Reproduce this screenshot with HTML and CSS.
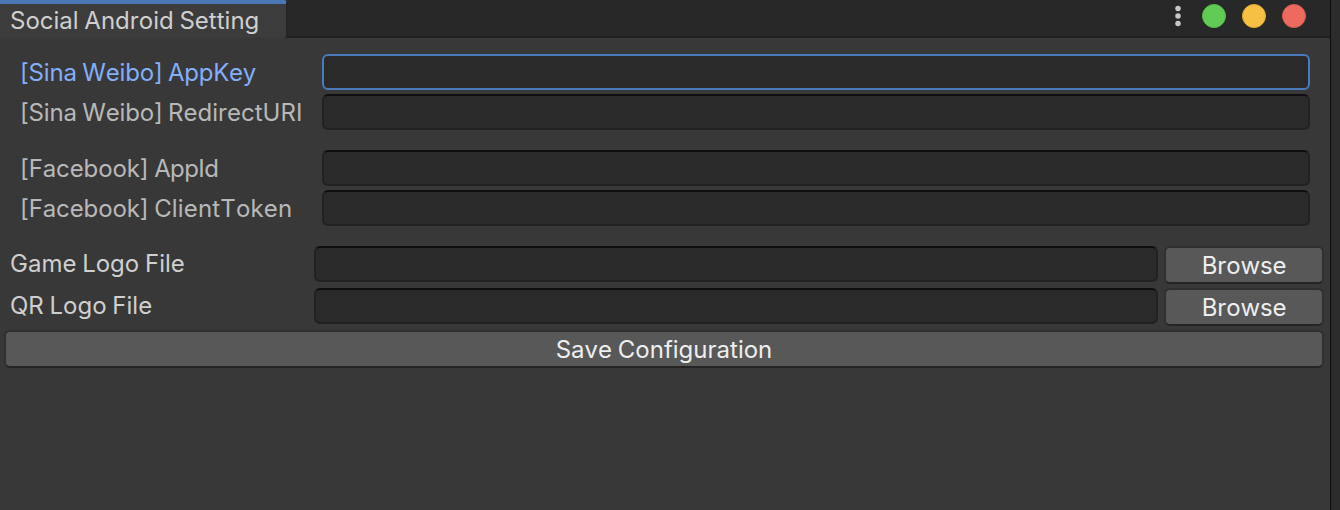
FILE: index.html
```html
<!DOCTYPE html>
<html lang="en">
<head>
<meta charset="utf-8">
<title>Social Android Setting</title>
<link rel="stylesheet" href="styles.css">
</head>
<body>
<div class="screen">
  <main class="window">
    <header class="titlebar">
      <div class="tab"><span class="tab-label">Social Android Setting</span></div>
      <div class="strip">
        <svg class="menu" width="6" height="22" viewBox="0 0 6 22"><g fill="#c8c8c8"><circle cx="3" cy="3.5" r="2.75"/><circle cx="3" cy="11" r="2.75"/><circle cx="3" cy="18.5" r="2.75"/></g></svg>
        <span class="dot green"></span>
        <span class="dot yellow"></span>
        <span class="dot red"></span>
      </div>
    </header>
    <section class="group">
      <label class="row active"><span class="label"><span class="weibo">[Sina Weibo] </span><span class="app-key">AppKey</span></span><input class="field" type="text"></label>
      <label class="row"><span class="label"><span class="weibo">[Sina Weibo] </span>RedirectURI</span><input class="field" type="text"></label>
    </section>
    <section class="group">
      <label class="row"><span class="label"><span class="facebook">[Facebook] </span><span class="app-id">AppId</span></span><input class="field" type="text"></label>
      <label class="row"><span class="label"><span class="facebook">[Facebook] </span><span class="token">ClientToken</span></span><input class="field" type="text"></label>
    </section>
    <section class="files">
      <div class="file-row"><span class="file-label">Game Logo File</span><input class="field" type="text"><button class="button browse">Browse</button></div>
      <div class="file-row"><span class="file-label">QR Logo File</span><input class="field" type="text"><button class="button browse">Browse</button></div>
      <button class="button save">Save Configuration</button>
    </section>
  </main>
</div>
</body>
</html>
```
FILE: styles.css
```css
* { box-sizing: border-box; }
body { margin: 0; background: #2c2c2c; font: 400 24px/36px Inter, sans-serif; font-kerning: none; word-spacing: -1px; color: #cfcfcf; }
.screen { width: 1340px; height: 510px; overflow: hidden; }
.window { width: 1331px; height: 510px; background: #383838; border-right: 1px solid #0c0c0c; }
.titlebar { display: flex; height: 38px; background: #282828; }
.tab { width: 287px; padding: 0 0 0 10px; background: #3c3c3c; border-top: 4px solid #4a78b5; border-right: 1px solid #232323; border-radius: 0 3px 3px 0; line-height: 34px; white-space: nowrap; }
.strip { flex: 1; display: flex; justify-content: flex-end; align-items: center; gap: 16px; padding: 0 24px 4px 0; border-bottom: 2px solid #202020; }
.menu { margin-right: 5px; }
.dot { width: 24px; height: 24px; border-radius: 50%; }
.green { background: #61cb56; border: 1px solid #55bb49; }
.yellow { background: #f5c043; border: 1px solid #e0ac38; }
.red { background: #ed6a5f; border: 1px solid #dc5a50; }
.group { display: flex; flex-direction: column; gap: 4px; padding: 16px 20px 4px; }
.row { display: flex; height: 36px; color: #b8b8b8; }
.label { width: 302px; padding-top: 1px; white-space: nowrap; }
.weibo { letter-spacing: -0.18px; }
.facebook { letter-spacing: -0.1px; }
.app-key { letter-spacing: -0.3px; }
.app-id { letter-spacing: -0.6px; }
.token { letter-spacing: 0.15px; }
.field { flex: 1; min-width: 0; height: 36px; padding: 0 6px; background: #2a2a2a; border: 2px solid #212121; border-top-color: #0e0e0e; border-radius: 6px; outline: none; font: inherit; color: #d2d2d2; }
.active { color: #83aef8; }
.active .field { border-color: #4a7bbd; }
.files { display: flex; flex-direction: column; gap: 4px; padding: 16px 6px 0 4px; }
.file-row { display: flex; height: 38px; }
.file-label { width: 310px; padding-left: 6px; }
.button { height: 38px; padding: 2px 0 0; border: 2px solid #303030; border-bottom-color: #242424; border-radius: 6px; background: #585858; font: inherit; font-kerning: none; line-height: 32px; letter-spacing: inherit; word-spacing: inherit; color: #eee; }
.browse { width: 160px; margin-left: 6px; letter-spacing: -0.15px; }
.save { width: 100%; }
```
